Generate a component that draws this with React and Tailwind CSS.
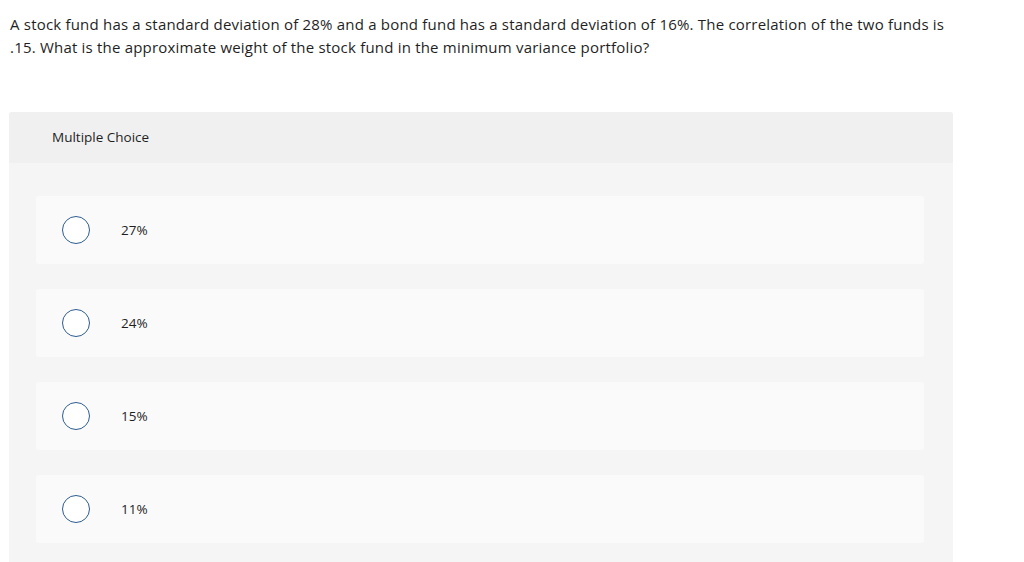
export default function App() {
  const options = ["27%", "24%", "15%", "11%"];
  return (
    <div className="min-h-[562px] bg-white text-[#1f1f1f] font-['Open_Sans',sans-serif]">
      <div className="pl-[10px] pr-[79px] pt-[13px] text-[15px] leading-[23px] tracking-[0.2px]">
        A stock fund has a standard deviation of 28% and a bond fund has a standard deviation of 16%. The correlation of the two funds is .15. What is the approximate weight of the stock fund in the minimum variance portfolio?
      </div>

      <div className="mt-[53px] ml-[9px] w-[944px] rounded-t-[3px] bg-[#f5f5f5] pb-[20px]">
        <div className="h-[51px] flex items-center pl-[43px] rounded-t-[3px] bg-[#f0f0f0] text-[13.5px]">
          Multiple Choice
        </div>
        <div className="pl-[27px] pr-[29px] pt-[33px] flex flex-col gap-[25px]">
          {options.map((o) => (
            <div key={o} className="h-[68px] flex items-center rounded-[3px] bg-[#fafafa]">
              <div className="ml-[26px] w-[28px] h-[28px] rounded-full border-[1.5px] border-[#2c5d8f] bg-white" />
              <span className="ml-[31px] text-[13.5px]">{o}</span>
            </div>
          ))}
        </div>
      </div>
    </div>
  );
}
